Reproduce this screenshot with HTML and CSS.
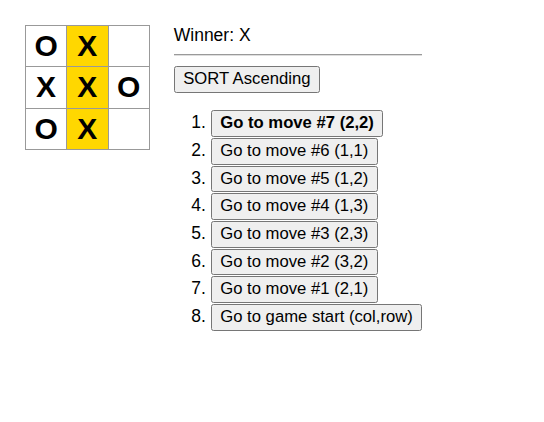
FILE: index.html
```html
<!DOCTYPE html>
<html>
<head>
<meta charset="utf-8">
<link rel="stylesheet" href="styles.css">
</head>
<body>
<div class="game">
  <div class="game-board">
    <div class="board-row">
      <button class="square">O</button><button class="square win">X</button><button class="square"></button>
    </div>
    <div class="board-row">
      <button class="square">X</button><button class="square win">X</button><button class="square">O</button>
    </div>
    <div class="board-row">
      <button class="square">O</button><button class="square win">X</button><button class="square"></button>
    </div>
  </div>
  <div class="game-info">
    <div class="status">Winner: X</div>
    <hr class="rule">
    <div><button class="btn">SORT Ascending</button></div>
    <ol class="moves">
      <li><button class="btn current">Go to move #7 (2,2)</button></li>
      <li><button class="btn">Go to move #6 (1,1)</button></li>
      <li><button class="btn">Go to move #5 (1,2)</button></li>
      <li><button class="btn">Go to move #4 (1,3)</button></li>
      <li><button class="btn">Go to move #3 (2,3)</button></li>
      <li><button class="btn">Go to move #2 (3,2)</button></li>
      <li><button class="btn">Go to move #1 (2,1)</button></li>
      <li><button class="btn">Go to game start (col,row)</button></li>
    </ol>
  </div>
</div>
</body>
</html>
```
FILE: styles.css
```css
html, body {
  background: #fff;
}
body {
  margin: 0;
  padding: 25px;
  font: 17.5px "Liberation Sans", Arial, sans-serif;
  color: #000;
}
.game {
  display: flex;
  flex-direction: row;
  align-items: flex-start;
}
.game-board {
  display: flex;
  flex-direction: column;
  padding-top: 1px;
}
.board-row {
  display: flex;
}
.square {
  box-sizing: border-box;
  width: 42.25px;
  height: 42.25px;
  margin-right: -1px;
  margin-top: -1px;
  padding: 0;
  border: 1px solid #999;
  background: #fff;
  font: bold 30px "Liberation Sans", Arial, sans-serif;
  line-height: 40px;
  text-align: center;
  color: #000;
}
.square.win {
  background: #ffd700;
}
.game-info {
  margin-left: 25px;
}
.status {
  line-height: 20px;
}
.rule {
  border: none;
  border-top: 1px solid #9a9a9a;
  border-bottom: 1px solid #dedede;
  height: 0;
  margin: 9px 0 10px;
}
.btn {
  -webkit-appearance: none;
  appearance: none;
  font: 16.67px "Liberation Sans", Arial, sans-serif;
  color: #000;
  background: #efefef;
  border: 1px solid #767676;
  border-radius: 2.5px;
  padding: 2px 8.5px;
  line-height: 20.7px;
  margin: 0;
}
.btn.current {
  font-weight: bold;
}
.moves {
  margin: 17.5px 0 0;
  padding-left: 37px;
}
.moves li {
  line-height: 20px;
  margin-bottom: 1px;
}
```
